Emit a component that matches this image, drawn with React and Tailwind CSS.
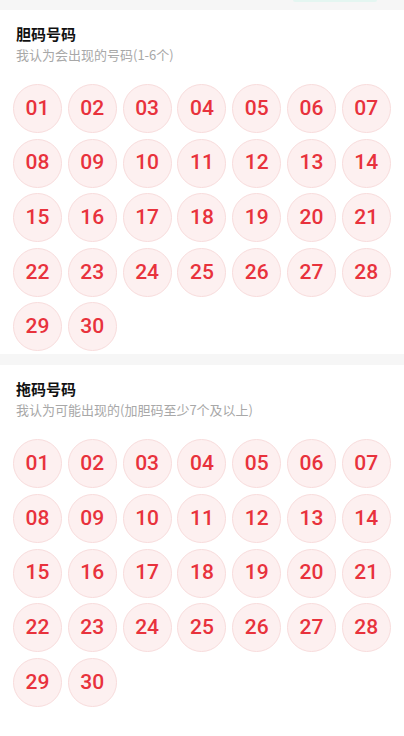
import React from 'react';

const nums = Array.from({ length: 30 }, (_, i) => String(i + 1).padStart(2, '0'));

const Section = ({ title, hint }) => (
    <div className="bg-white pt-[13px] pb-[3px]">
        <div className="px-4">
            <h2 className="text-[15px] leading-[21px] font-bold text-[#111]">{title}</h2>
            <p className="mt-[2px] text-[13px] leading-[18px] text-[#a8a8a8]">{hint}</p>
        </div>
        <div className="mt-[20px] px-[13px] grid grid-cols-7 gap-x-[5.6px] gap-y-[5.6px]">
            {nums.map(n => (
                <div
                    key={n}
                    className="w-[49px] h-[49px] rounded-full bg-[#fdf0f0] border border-[#f8dcdc] flex items-center justify-center text-[21px] text-[#e8323c] font-medium"
                    style={{ fontFamily: 'Roboto, "Noto Sans", sans-serif' }}
                >
                    {n}
                </div>
            ))}
        </div>
    </div>
);

export default function App() {
    return (
        <div
            className="min-h-[736px] bg-white"
            style={{ fontFamily: '"Noto Sans CJK SC", "Noto Sans", sans-serif' }}
        >
            <div className="h-[10px] bg-[#f6f6f6] relative">
                <div className="absolute left-[293px] top-0 w-[84px] h-[2px] bg-[#e4f6f1] rounded-b" />
            </div>
            <Section title="胆码号码" hint="我认为会出现的号码(1-6个)" />
            <div className="h-[11px] bg-[#f6f6f6]" />
            <Section title="拖码号码" hint="我认为可能出现的(加胆码至少7个及以上)" />
        </div>
    );
}
